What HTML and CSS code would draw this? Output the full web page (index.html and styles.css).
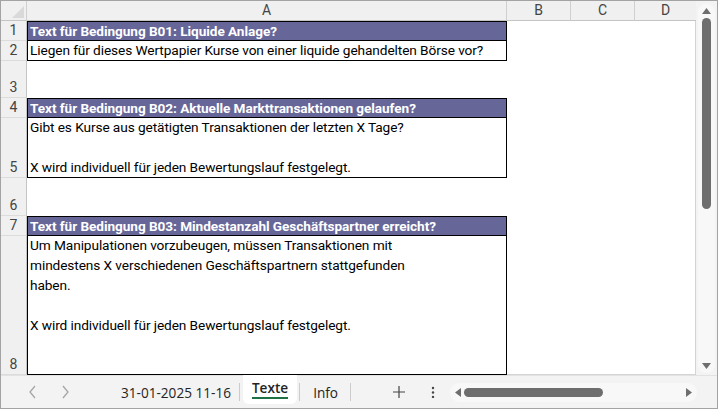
FILE: index.html
```html
<!DOCTYPE html>
<html lang="de">
<head>
<meta charset="utf-8">
<title>Texte</title>
<link rel="stylesheet" href="styles.css">
</head>
<body>
<div class="window">
  <div class="main">
    <div class="sheet">
      <div class="corner"><svg class="corner-tri" width="12" height="12" viewBox="0 0 12 12"><polygon points="12,0 12,12 0,12" fill="#d9d9d9"/></svg></div>
      <div class="colh">A</div>
      <div class="colh">B</div>
      <div class="colh">C</div>
      <div class="colh last">D</div>

      <div class="rowh">1</div>
      <div class="cell title">Text für Bedingung B01: Liquide Anlage?</div>
      <div></div><div></div><div></div>

      <div class="rowh">2</div>
      <div class="cell body">Liegen für dieses Wertpapier Kurse von einer liquide gehandelten Börse vor?</div>
      <div></div><div></div><div></div>

      <div class="rowh">3</div>
      <div></div><div></div><div></div><div></div>

      <div class="rowh">4</div>
      <div class="cell title">Text für Bedingung B02: Aktuelle Markttransaktionen gelaufen?</div>
      <div></div><div></div><div></div>

      <div class="rowh">5</div>
      <div class="cell body">Gibt es Kurse aus getätigten Transaktionen der letzten X Tage?<br><br>X wird individuell für jeden Bewertungslauf festgelegt.</div>
      <div></div><div></div><div></div>

      <div class="rowh">6</div>
      <div></div><div></div><div></div><div></div>

      <div class="rowh">7</div>
      <div class="cell title">Text für Bedingung B03: Mindestanzahl Geschäftspartner erreicht?</div>
      <div></div><div></div><div></div>

      <div class="rowh">8</div>
      <div class="cell body">Um Manipulationen vorzubeugen, müssen Transaktionen mit<br>mindestens X verschiedenen Geschäftspartnern stattgefunden<br>haben.<br><br>X wird individuell für jeden Bewertungslauf festgelegt.</div>
      <div></div><div></div><div></div>
    </div>
    <div class="vscroll">
      <div class="vtrack">
        <svg class="arrow" width="9" height="6" viewBox="0 0 9 6"><polygon points="4.5,0 9,6 0,6" fill="#6e6e6e"/></svg>
        <div class="vthumb"></div>
        <div class="vspace"></div>
        <svg class="arrow" width="9" height="6" viewBox="0 0 9 6"><polygon points="0,0 9,0 4.5,6" fill="#6e6e6e"/></svg>
      </div>
    </div>
  </div>
  <div class="tabbar">
    <div class="nav">
      <svg width="10" height="14" viewBox="0 0 10 14"><polyline points="7,1 2,7 7,13" fill="none" stroke="#a6a6a6" stroke-width="1.3"/></svg>
      <svg width="10" height="14" viewBox="0 0 10 14"><polyline points="3,1 8,7 3,13" fill="none" stroke="#a6a6a6" stroke-width="1.3"/></svg>
    </div>
    <div class="tab">31-01-2025 11-16</div>
    <div class="sep"></div>
    <div class="tab active"><span class="tab-label">Texte</span></div>
    <div class="sep"></div>
    <div class="tab info">Info</div>
    <div class="sep"></div>
    <div class="tool plus">
      <svg width="12" height="12" viewBox="0 0 12 12"><path d="M6 0 V12 M0 6 H12" stroke="#444" stroke-width="1.2"/></svg>
    </div>
    <div class="tool dots">
      <svg width="4" height="12" viewBox="0 0 4 12"><circle cx="2" cy="2" r="1.2" fill="#444"/><circle cx="2" cy="6.5" r="1.2" fill="#444"/><circle cx="2" cy="11" r="1.2" fill="#444"/></svg>
    </div>
    <div class="htrack">
      <svg class="harrow" width="6" height="9" viewBox="0 0 6 9"><polygon points="0,4.5 6,0 6,9" fill="#6e6e6e"/></svg>
      <div class="hthumb"></div>
      <div class="hspace"></div>
      <svg class="harrow" width="6" height="9" viewBox="0 0 6 9"><polygon points="0,0 6,4.5 0,9" fill="#6e6e6e"/></svg>
    </div>
  </div>
</div>
</body>
</html>
```

FILE: styles.css
```css
* { box-sizing: border-box; }
html, body { margin: 0; padding: 0; background: #ffffff; }
body { font-family: Roboto, "Liberation Sans", sans-serif; }

.window {
  width: 718px;
  height: 409px;
  border: 1px solid #a3a3a3;
  background: #f3f3f3;
  display: flex;
  flex-direction: column;
  overflow: hidden;
}

.main {
  display: flex;
  height: 374px;
}

.sheet {
  width: 695px;
  display: grid;
  grid-template-columns: 26px 480px 64px 64px 61px;
  grid-template-rows: 20px 20px 20px 37px 20px 60px 38px 20px 139px;
  background: #ffffff;
  border-right: 1px solid #d4d4d4;
  border-bottom: 1px solid #d4d4d4;
}

.corner {
  background: #f0f0f0;
  border-right: 1px solid #d0d0d0;
  border-bottom: 1px solid #c4c4c4;
  display: flex;
  align-items: flex-end;
  justify-content: flex-end;
  padding: 0 2px 2px 0;
}
.corner-tri { display: block; }

.colh {
  background: #f0f0f0;
  border-right: 1px solid #d0d0d0;
  border-bottom: 1px solid #c4c4c4;
  font-size: 14px;
  color: #444444;
  text-align: center;
  line-height: 19px;
}
.colh.last { border-right: none; }

.rowh {
  background: #f0f0f0;
  border-right: 1px solid #c4c4c4;
  border-bottom: 1px solid #dcdcdc;
  font-size: 14px;
  color: #444444;
  display: flex;
  align-items: flex-end;
  justify-content: center;
  line-height: 19px;
}

.cell {
  font-size: 13.7px;
  line-height: 20px;
  padding-left: 2px;
  white-space: nowrap;
  border-left: 1px solid #000;
  border-right: 1px solid #000;
  color: #000;
}
.cell.title {
  background: #666699;
  color: #ffffff;
  font-weight: bold;
  font-size: 13.6px;
  border-top: 1px solid #000;
  border-bottom: 1px solid #000;
  line-height: 18px;
  letter-spacing: -0.05px;
}
.cell.body {
  border-bottom: 1px solid #000;
  line-height: 20px;
  margin-top: -1px;
  padding-top: 0;
  letter-spacing: -0.1px;
}

.vscroll {
  width: 20px;
  padding: 3px 1px 2px 2px;
  background: #f3f3f3;
}
.vtrack {
  height: 100%;
  background: #f8f8f8;
  border-radius: 8px;
  display: flex;
  flex-direction: column;
  align-items: center;
  padding: 4px 0 4px;
}
.arrow { display: block; flex: none; }
.vthumb {
  width: 9px;
  height: 191px;
  margin-top: 4px;
  background: #6e6e6e;
  border-radius: 5px;
  flex: none;
}
.vspace { flex: 1; }

.tabbar {
  flex: 1;
  display: flex;
  align-items: center;
  background: #f3f3f3;
  border-top: 1px solid #e2e2e2;
  font-family: "Open Sans", "Liberation Sans", sans-serif;
  font-size: 13.6px;
  color: #242424;
}
.nav {
  display: flex;
  gap: 22px;
  padding-left: 27px;
  width: 112px;
  flex: none;
}
.nav svg { display: block; }
.tab {
  padding: 0 8px;
  height: 100%;
  display: flex;
  align-items: center;
  white-space: nowrap;
}
.tab.active {
  background: #ffffff;
  border-radius: 0 0 6px 6px;
  margin: -1px 2px 0 3px;
  height: calc(100% - 3px);
  align-self: flex-start;
  padding: 0 9px;
  font-weight: 600;
}
.tab.info { padding: 0 12px 0 13px; }
.tab-label {
  border-bottom: 2px solid #1e7145;
  line-height: 16px;
  padding-bottom: 1px;
}
.sep {
  width: 1px;
  height: 18px;
  background: #cccccc;
  flex: none;
}
.tool {
  display: flex;
  align-items: center;
  justify-content: center;
  flex: none;
}
.tool svg { display: block; }
.plus { margin-left: 41px; width: 14px; }
.dots { margin-left: 25px; width: 4px; }
.htrack {
  margin-left: 15px;
  flex: 1;
  height: 19px;
  background: #f8f8f8;
  border-radius: 9px;
  display: flex;
  align-items: center;
  padding: 0 5px 0 5px;
  margin-right: 20px;
}
.harrow { display: block; flex: none; }
.hthumb {
  width: 139px;
  height: 9px;
  margin-left: 3px;
  background: #6e6e6e;
  border-radius: 5px;
  flex: none;
}
.hspace { flex: 1; }
```
